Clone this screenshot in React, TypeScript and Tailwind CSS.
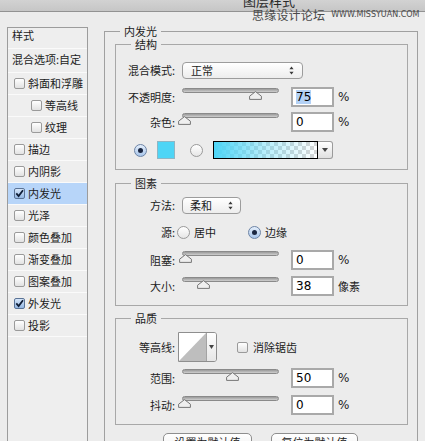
import React from "react";

const CJK = "font-['Noto_Sans_CJK_SC','Noto_Sans',sans-serif]";
const NUM = "font-['DejaVu_Sans','Noto_Sans',sans-serif]";

function Check({ checked }: { checked?: boolean }) {
  return (
    <span
      className={
        checked
          ? "flex h-[11px] w-[11px] shrink-0 items-center justify-center rounded-[2px] border border-[#5a7396] bg-gradient-to-b from-[#d6e6f9] to-[#94b7e3]"
          : "flex h-[11px] w-[11px] shrink-0 items-center justify-center rounded-[2px] border border-[#9a9a9a] bg-gradient-to-b from-white to-[#e2e2e2]"
      }
    >
      {checked && (
        <svg width="9" height="9" viewBox="0 0 9 9">
          <path d="M1.3 4.4 L3.6 7 L8 1.2" fill="none" stroke="#0f1d36" strokeWidth="1.8" />
        </svg>
      )}
    </span>
  );
}

function Radio({ on }: { on?: boolean }) {
  return (
    <span
      className={
        on
          ? "flex h-[13px] w-[13px] shrink-0 items-center justify-center rounded-full border border-[#6c84a6] bg-gradient-to-b from-[#e4eefb] to-[#a7c5ea]"
          : "flex h-[13px] w-[13px] shrink-0 items-center justify-center rounded-full border border-[#9a9a9a] bg-gradient-to-b from-white to-[#e6e6e6]"
      }
    >
      {on && <span className="h-[5px] w-[5px] rounded-full bg-[#1a2640]" />}
    </span>
  );
}

function UpDown() {
  return (
    <svg width="5" height="9" viewBox="0 0 5 9" className="shrink-0">
      <path d="M2.5 0.5 L4.6 3.3 H0.4 Z M2.5 8.5 L4.6 5.7 H0.4 Z" fill="#3a3a3a" />
    </svg>
  );
}

function Label({ children }: { children: React.ReactNode }) {
  return <div className="w-[59px] shrink-0 text-right text-[11px] leading-[13px]">{children}</div>;
}

function Slider({ pos }: { pos: number }) {
  return (
    <div className="relative ml-[7px] h-[20px] w-[97px] shrink-0 self-start">
      <div className="mt-[1px] h-[5px] rounded-full border border-[#8a8a8a] bg-gradient-to-b from-[#9a9a9a] to-[#cfcfcf]" />
      <svg
        className="absolute top-[4px]"
        style={{ left: pos - 6 }}
        width="13"
        height="9"
        viewBox="0 0 13 9"
      >
        <path d="M6.5 0.6 L12.4 5.2 V8.4 H0.6 V5.2 Z" fill="#efefef" stroke="#767676" strokeWidth="1" />
      </svg>
    </div>
  );
}

function Num({ v, sel }: { v: string; sel?: boolean }) {
  return (
    <div
      className={`ml-[12px] flex h-[20px] w-[43px] shrink-0 items-center border-2 border-[#a9a9a9] bg-white pl-[3px] text-[12px] text-black ${NUM}`}
    >
      {sel ? <span className="bg-[#b3d1f5] leading-[14px]">{v}</span> : <span className="leading-[14px]">{v}</span>}
    </div>
  );
}

function Pct() {
  return <span className={`ml-[4px] text-[12px] leading-[14px] ${NUM}`}>%</span>;
}

function SliderRow({
  label,
  pos,
  v,
  sel,
  unit,
  mt,
}: {
  label: string;
  pos: number;
  v: string;
  sel?: boolean;
  unit?: string;
  mt: string;
}) {
  return (
    <div className={`flex h-[20px] items-center ${mt}`}>
      <Label>{label}</Label>
      <Slider pos={pos} />
      <Num v={v} sel={sel} />
      {unit ? <span className="ml-[4px] text-[11px] leading-[13px]">{unit}</span> : <Pct />}
    </div>
  );
}

function Legend({ children }: { children: React.ReactNode }) {
  return <legend className="ml-[15px] px-[4px] text-[11px] leading-[12px]">{children}</legend>;
}

const items: { t: string; indent?: boolean; checked?: boolean; active?: boolean }[] = [
  { t: "斜面和浮雕" },
  { t: "等高线", indent: true },
  { t: "纹理", indent: true },
  { t: "描边" },
  { t: "内阴影" },
  { t: "内发光", checked: true, active: true },
  { t: "光泽" },
  { t: "颜色叠加" },
  { t: "渐变叠加" },
  { t: "图案叠加" },
  { t: "外发光", checked: true },
  { t: "投影" },
];

export default function App() {
  return (
    <div className={`relative h-[441px] w-[425px] overflow-hidden bg-[#ececec] text-[#1c1c1c] ${CJK}`}>
      {/* title bar */}
      <div className="h-[12px] overflow-hidden border-b border-[#929292] bg-gradient-to-b from-[#d2d2d2] to-[#c6c6c6]">
        <div className="-mt-[6px] pl-[243px] text-[13px] leading-[14px] text-[#2a2a2a]">图层样式</div>
      </div>

      <div className="flex items-start">
        {/* left list */}
        <div className="ml-[7px] mt-[15px] h-[440px] w-[81px] shrink-0 border border-[#9c9c9c] bg-[#eeeeee]">
          <div className="h-[21px] border-b border-[#fafafa] pl-[4px] pt-[1px] text-[11px] leading-[13px]">样式</div>
          <div className="h-[24px] border-b border-[#fafafa] pl-[4px] pt-[4px] text-[11px] leading-[13px]">混合选项:自定</div>
          {items.map((it) => (
            <div
              key={it.t}
              className={`flex h-[22px] items-center gap-[3px] border-b border-[#fafafa] text-[11px] leading-[13px] ${
                it.indent ? "pl-[23px]" : "pl-[6px]"
              } ${it.active ? "bg-[#b7d5f9]" : ""}`}
            >
              <Check checked={it.checked} />
              <span>{it.t}</span>
            </div>
          ))}
        </div>

        {/* right frame */}
        <fieldset className="ml-[16px] mt-[13px] h-[460px] w-[314px] shrink-0 border border-[#a0a0a0]">
          <Legend>内发光</Legend>

          {/* 结构 */}
          <fieldset className="ml-[10px] mt-[1px] w-[293px] border border-[#a8a8a8] pb-[10px]">
            <Legend>结构</Legend>
            <div className="mt-[12px] flex h-[17px] items-center">
              <Label>混合模式:</Label>
              <div className="ml-[7px] flex h-[17px] w-[121px] items-center justify-between rounded-[4px] border border-[#9c9c9c] bg-gradient-to-b from-white to-[#ededed] pl-[8px] pr-[8px] text-[11px] leading-[13px]">
                <span>正常</span>
                <UpDown />
              </div>
            </div>
            <SliderRow label="不透明度:" pos={73} v="75" sel mt="mt-[8px]" />
            <SliderRow label="杂色:" pos={2} v="0" mt="mt-[5px]" />
            <div className="mt-[9px] flex h-[18px] items-center pl-[18px]">
              <Radio on />
              <div className="ml-[10px] h-[18px] w-[18px] border border-[#8fb6c4] bg-[#4ed5f6]" />
              <div className="ml-[15px]">
                <Radio />
              </div>
              <div className="ml-[10px] h-[18px] w-[105px] border border-black bg-[repeating-conic-gradient(#d6d6d6_0%_25%,#ffffff_0%_50%)] bg-[length:8px_8px]">
                <div className="h-full w-full bg-gradient-to-r from-[#4ed5f6] via-[#4ed5f6]/40 to-transparent" />
              </div>
              <div className="flex h-[18px] w-[15px] items-center justify-center rounded-r-[3px] border border-l-0 border-[#9b9b9b] bg-gradient-to-b from-white to-[#e0e0e0]">
                <svg width="6" height="4" viewBox="0 0 6 4">
                  <path d="M0 0 H6 L3 4 Z" fill="#444" />
                </svg>
              </div>
            </div>
          </fieldset>

          {/* 图素 */}
          <fieldset className="ml-[10px] mt-[7px] w-[293px] border border-[#a8a8a8] pb-[9px]">
            <Legend>图素</Legend>
            <div className="mt-[8px] flex h-[17px] items-center">
              <Label>方法:</Label>
              <div className="ml-[7px] flex h-[17px] w-[59px] items-center justify-between rounded-[4px] border border-[#9c9c9c] bg-gradient-to-b from-white to-[#ededed] pl-[7px] pr-[7px] text-[11px] leading-[13px]">
                <span>柔和</span>
                <UpDown />
              </div>
            </div>
            <div className="mt-[12px] flex h-[13px] items-center text-[11px] leading-[13px]">
              <Label>源:</Label>
              <div className="ml-[2px]">
                <Radio />
              </div>
              <span className="ml-[4px]">居中</span>
              <div className="ml-[32px]">
                <Radio on />
              </div>
              <span className="ml-[4px]">边缘</span>
            </div>
            <SliderRow label="阻塞:" pos={3} v="0" mt="mt-[11px]" />
            <SliderRow label="大小:" pos={21} v="38" unit="像素" mt="mt-[6px]" />
          </fieldset>

          {/* 品质 */}
          <fieldset className="ml-[10px] mt-[6px] w-[293px] border border-[#a8a8a8] pb-[9px]">
            <Legend>品质</Legend>
            <div className="mt-[8px] flex h-[30px] items-center">
              <Label>等高线:</Label>
              <div className="ml-[3px] flex h-[30px] overflow-hidden rounded-r-[3px] border border-[#8e8e8e] bg-white">
                <svg width="27" height="28" viewBox="0 0 27 28" className="block">
                  <rect width="27" height="28" fill="#ffffff" />
                  <path d="M0 28 L27 0 V28 Z" fill="#bebebe" />
                </svg>
                <div className="flex w-[10px] items-center justify-center border-l border-[#a3a3a3] bg-gradient-to-b from-white to-[#e6e6e6]">
                  <svg width="5" height="4" viewBox="0 0 5 4">
                    <path d="M0 0 H5 L2.5 4 Z" fill="#444" />
                  </svg>
                </div>
              </div>
              <div className="ml-[20px]">
                <Check />
              </div>
              <span className="ml-[5px] text-[11px] leading-[13px]">消除锯齿</span>
            </div>
            <SliderRow label="范围:" pos={50} v="50" mt="mt-[6px]" />
            <SliderRow label="抖动:" pos={2} v="0" mt="mt-[7px]" />
          </fieldset>

          <div className="ml-[58px] mt-[8px] flex gap-[19px] text-[11px] leading-[13px]">
            <div className="h-[20px] w-[89px] rounded-[5px] border border-[#8e8e8e] bg-gradient-to-b from-white to-[#eeeeee] pt-[2px] text-center">
              设置为默认值
            </div>
            <div className="h-[20px] w-[87px] rounded-[5px] border border-[#8e8e8e] bg-gradient-to-b from-white to-[#eeeeee] pt-[2px] text-center">
              复位为默认值
            </div>
          </div>
        </fieldset>
      </div>

      {/* watermark */}
      <div className="absolute left-[252px] top-[8px] flex items-center text-[#4a4a4a]">
        <span className="text-[12px] leading-[14px] tracking-[0.2px]">思缘设计论坛</span>
        <span className={`ml-[6px] text-[8px] leading-[10px] ${NUM}`}>WWW.MISSYUAN.COM</span>
      </div>
    </div>
  );
}
